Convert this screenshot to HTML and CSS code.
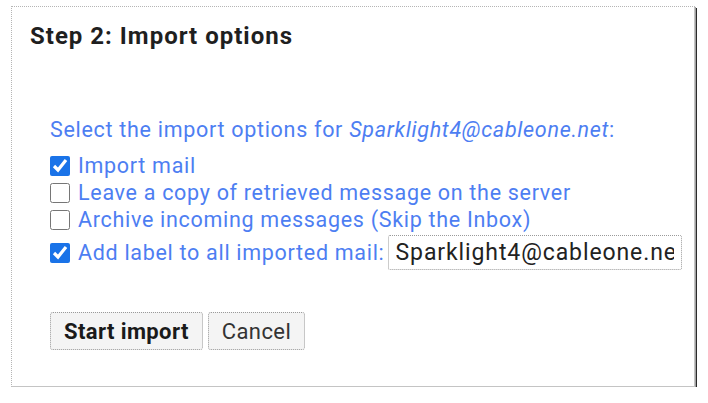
FILE: index.html
```html
<!DOCTYPE html>
<html lang="en">
<head>
    <meta charset="UTF-8">
    <meta name="viewport" content="width=device-width, initial-scale=1.0">
    <title>Import options</title>
    <link rel="stylesheet" href="styles.css">
</head>
<body>
    <div class="panel">
        <h2 class="step-title">Step 2: Import options</h2>

        <div class="options">
            <p class="intro">Select the import options for <em>Sparklight4@cableone.net</em>:</p>

            <label class="option">
                <input type="checkbox" checked>
                <span>Import mail</span>
            </label>
            <label class="option">
                <input type="checkbox">
                <span>Leave a copy of retrieved message on the server</span>
            </label>
            <label class="option">
                <input type="checkbox">
                <span>Archive incoming messages (Skip the Inbox)</span>
            </label>
            <label class="option option-label">
                <input type="checkbox" checked>
                <span>Add label to all imported mail:</span>
                <input type="text" class="label-input" value="Sparklight4@cableone.net">
            </label>

            <div class="actions">
                <button class="btn btn-primary">Start import</button>
                <button class="btn">Cancel</button>
            </div>
        </div>
    </div>
</body>
</html>
```

FILE: styles.css
```css
body {
    margin: 0;
    background-color: #fff;
    font-family: Roboto, 'Liberation Sans', Arial, sans-serif;
}

.panel {
    box-sizing: border-box;
    width: 684px;
    height: 381px;
    margin: 6px 0 0 11px;
    padding: 15px 0 0 18px;
    border-top: 1px dotted #b5b5b5;
    border-left: 1px dotted #b5b5b5;
    border-right: 1px solid #c4c4c4;
    border-bottom: 1px solid #c4c4c4;
    box-shadow: 1px 1px 0 #a0a0a0, 2px 2px 0 #2a2a2a;
}

.step-title {
    margin: 0;
    font-size: 24px;
    font-weight: bold;
    line-height: 28px;
    letter-spacing: 1px;
    color: #1f1f1f;
}

.options {
    padding-left: 20px;
    margin-top: 67px;
    color: #4d7ef2;
    font-size: 21.5px;
    letter-spacing: 0.7px;
}

.intro {
    margin: 0 0 9px;
    line-height: 26px;
}

.intro em {
    font-style: italic;
}

.option {
    display: flex;
    align-items: center;
    height: 27px;
    white-space: nowrap;
}

.option input[type="checkbox"] {
    flex-shrink: 0;
    width: 20px;
    height: 20px;
    margin: 0 8px 0 0;
    accent-color: #1a73e8;
}

.option-label {
    height: 37px;
    margin-top: 1px;
}

.label-input {
    flex-shrink: 0;
    box-sizing: border-box;
    width: 294px;
    height: 35px;
    margin-left: 3px;
    padding: 0 7px;
    border: 1px dotted #9a9a9a;
    border-radius: 2px;
    font-family: inherit;
    font-size: 23px;
    letter-spacing: 0.9px;
    color: #222;
    outline: none;
}

.actions {
    display: flex;
    gap: 5px;
    margin-top: 41px;
}

.btn {
    height: 38px;
    padding: 0 13px;
    border: 1px dotted #9a9a9a;
    border-radius: 3px;
    background-color: #f4f4f4;
    font-family: inherit;
    font-size: 22px;
    letter-spacing: 0.4px;
    color: #333;
}

.btn-primary {
    font-weight: bold;
    color: #1a1a1a;
}
```
